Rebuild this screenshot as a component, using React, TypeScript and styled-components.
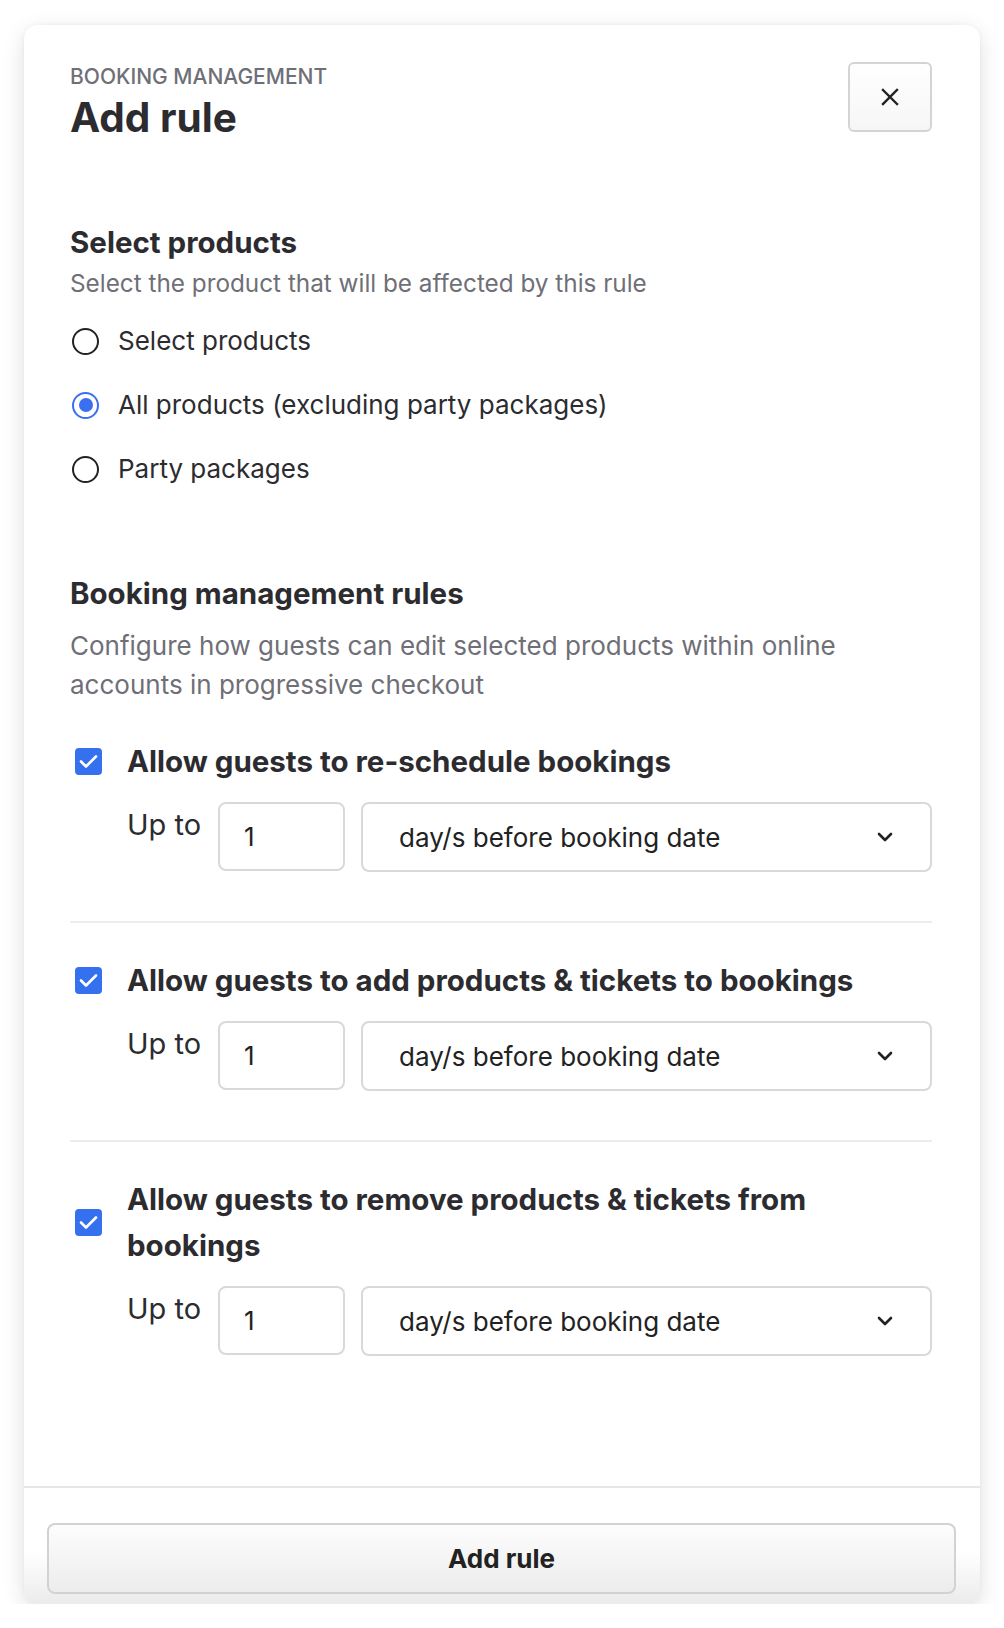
import styled, { createGlobalStyle } from 'styled-components'

const GlobalStyle = createGlobalStyle`
  html, body {
    margin: 0;
    padding: 0;
    background: #ffffff;
  }
  body {
    font-family: Inter, Roboto, 'Liberation Sans', sans-serif;
    color: #2c2c30;
  }
  * {
    box-sizing: border-box;
  }
`

const products = [
  { id: 'select', label: 'Select products', checked: false },
  { id: 'all', label: 'All products (excluding party packages)', checked: true },
  { id: 'party', label: 'Party packages', checked: false }
]

const rules = [
  { id: 'reschedule', label: 'Allow guests to re-schedule bookings' },
  { id: 'add', label: 'Allow guests to add products & tickets to bookings' },
  { id: 'remove', label: 'Allow guests to remove products & tickets from bookings' }
]

const CloseIcon = () => (
  <svg width="18" height="18" viewBox="0 0 18 18" fill="none">
    <path d="M2 2L16 16M16 2L2 16" stroke="#222" strokeWidth="2.4" strokeLinecap="square" />
  </svg>
)

const Chevron = () => (
  <svg width="16" height="10" viewBox="0 0 16 10" fill="none">
    <path d="M2 2L8 8L14 2" stroke="#222" strokeWidth="2.6" strokeLinecap="round" strokeLinejoin="round" />
  </svg>
)

const CheckMark = () => (
  <svg width="19" height="15" viewBox="0 0 19 15" fill="none">
    <path d="M2 7.5L7 12.5L17 2.5" stroke="#fff" strokeWidth="2.6" strokeLinecap="round" strokeLinejoin="round" />
  </svg>
)

export default function App() {
  return (
    <>
      <GlobalStyle />
      <Card>
        <Header>
          <TitleBlock>
            <Eyebrow>BOOKING MANAGEMENT</Eyebrow>
            <Title>Add rule</Title>
          </TitleBlock>
          <CloseButton aria-label="Close">
            <CloseIcon />
          </CloseButton>
        </Header>

        <Body>
          <SectionTitle $top={81}>Select products</SectionTitle>
          <Subtitle>Select the product that will be affected by this rule</Subtitle>
          <RadioList>
            {products.map((p) => (
              <RadioRow key={p.id}>
                <Radio $checked={p.checked} />
                <RadioLabel>{p.label}</RadioLabel>
              </RadioRow>
            ))}
          </RadioList>

          <SectionTitle $top={74}>Booking management rules</SectionTitle>
          <Description>
            Configure how guests can edit selected products within online accounts in progressive
            checkout
          </Description>

          {rules.map((rule, i) => (
            <Rule key={rule.id} $last={i === rules.length - 1}>
              <RuleHeader>
                <Checkbox>
                  <CheckMark />
                </Checkbox>
                <RuleLabel>{rule.label}</RuleLabel>
              </RuleHeader>
              <Controls>
                <UpTo>Up to</UpTo>
                <NumberBox>1</NumberBox>
                <SelectBox>
                  <span>day/s before booking date</span>
                  <Chevron />
                </SelectBox>
              </Controls>
            </Rule>
          ))}
        </Body>

        <Footer>
          <SubmitButton>Add rule</SubmitButton>
        </Footer>
      </Card>
    </>
  )
}

const Card = styled.div`
  margin: 25px 24px 0;
  height: 1579px;
  background: #fff;
  border-radius: 14px;
  box-shadow: 0 6px 22px rgba(0, 0, 0, 0.13), 0 0 4px rgba(0, 0, 0, 0.04);
  display: flex;
  flex-direction: column;
  overflow: hidden;
`

const Header = styled.div`
  display: flex;
  justify-content: space-between;
  align-items: flex-start;
  padding: 37px 48px 0 46px;
`

const TitleBlock = styled.div`
  padding-top: 2px;
`

const Eyebrow = styled.div`
  font-size: 21px;
  line-height: 25px;
  font-weight: 500;
  color: #6f6f77;
`

const Title = styled.h1`
  margin: 4px 0 0;
  font-size: 40.5px;
  line-height: 50px;
  font-weight: 700;
  color: #2c2c30;
`

const CloseButton = styled.button`
  width: 84px;
  height: 70px;
  display: flex;
  align-items: center;
  justify-content: center;
  background: linear-gradient(#ffffff, #f6f6f6);
  border: 2px solid #d4d4d4;
  border-radius: 6px;
  padding: 0;
`

const Body = styled.div`
  flex: 1;
  padding: 0 48px 0 46px;
`

const SectionTitle = styled.h2<{ $top: number }>`
  margin: ${(p) => p.$top}px 0 0;
  font-size: 29.5px;
  line-height: 36px;
  font-weight: 700;
  color: #2c2c30;
`

const Subtitle = styled.p`
  margin: 5px 0 0;
  font-size: 24.3px;
  line-height: 36px;
  color: #6f6f77;
`

const RadioList = styled.div`
  margin-top: 8px;
  display: flex;
  flex-direction: column;
`

const RadioRow = styled.label`
  height: 64px;
  display: flex;
  align-items: center;
  gap: 19px;
  padding-left: 2px;
`

const Radio = styled.span<{ $checked: boolean }>`
  width: 27px;
  height: 27px;
  flex: none;
  border-radius: 50%;
  border: ${(p) => (p.$checked ? '2.5px solid #3a6ff0' : '2px solid #222')};
  display: flex;
  align-items: center;
  justify-content: center;
  &::after {
    content: '';
    display: ${(p) => (p.$checked ? 'block' : 'none')};
    width: 14px;
    height: 14px;
    border-radius: 50%;
    background: #3a6ff0;
  }
`

const RadioLabel = styled.span`
  font-size: 26px;
  line-height: 36px;
  color: #2c2c30;
`

const Description = styled.p`
  margin: 15px 0 0;
  font-size: 26px;
  line-height: 39px;
  color: #6f6f77;
`

const Rule = styled.div<{ $last: boolean }>`
  padding: 34px 0 49px;
  border-bottom: 2px solid ${(p) => (p.$last ? 'transparent' : '#ececec')};
`

const RuleHeader = styled.div`
  display: flex;
  align-items: center;
  gap: 25px;
`

const Checkbox = styled.span`
  width: 27px;
  height: 27px;
  flex: none;
  margin-left: 5px;
  border-radius: 4px;
  background: #3570ef;
  display: flex;
  align-items: center;
  justify-content: center;
`

const RuleLabel = styled.span`
  font-size: 29.5px;
  line-height: 46px;
  font-weight: 700;
  color: #2c2c30;
  padding-right: 60px;
`

const Controls = styled.div`
  margin-top: 18px;
  padding-left: 57px;
  display: flex;
  align-items: flex-start;
`

const UpTo = styled.span`
  font-size: 29px;
  line-height: 35px;
  padding-top: 5px;
  color: #2c2c30;
  margin-right: 17px;
`

const NumberBox = styled.div`
  width: 127px;
  height: 69px;
  flex: none;
  border: 2px solid #d9d9d9;
  border-radius: 8px;
  display: flex;
  align-items: center;
  padding-left: 24px;
  font-size: 26px;
  color: #222;
  margin-right: 16px;
`

const SelectBox = styled.div`
  flex: 1;
  height: 70px;
  border: 2px solid #d9d9d9;
  border-radius: 8px;
  display: flex;
  align-items: center;
  justify-content: space-between;
  padding: 0 37px 0 36px;
  font-size: 26px;
  color: #222;
`

const Footer = styled.div`
  border-top: 2px solid #e6e6e6;
  padding: 35px 24px 10px 23px;
  background: linear-gradient(#ffffff 55%, #ebebeb 100%);
`

const SubmitButton = styled.button`
  width: 100%;
  height: 71px;
  border: 2px solid #d2d2d2;
  border-radius: 8px;
  background: linear-gradient(#fdfdfd, #ececec);
  font-family: Inter, Roboto, 'Liberation Sans', sans-serif;
  font-size: 26px;
  font-weight: 700;
  color: #222;
`
